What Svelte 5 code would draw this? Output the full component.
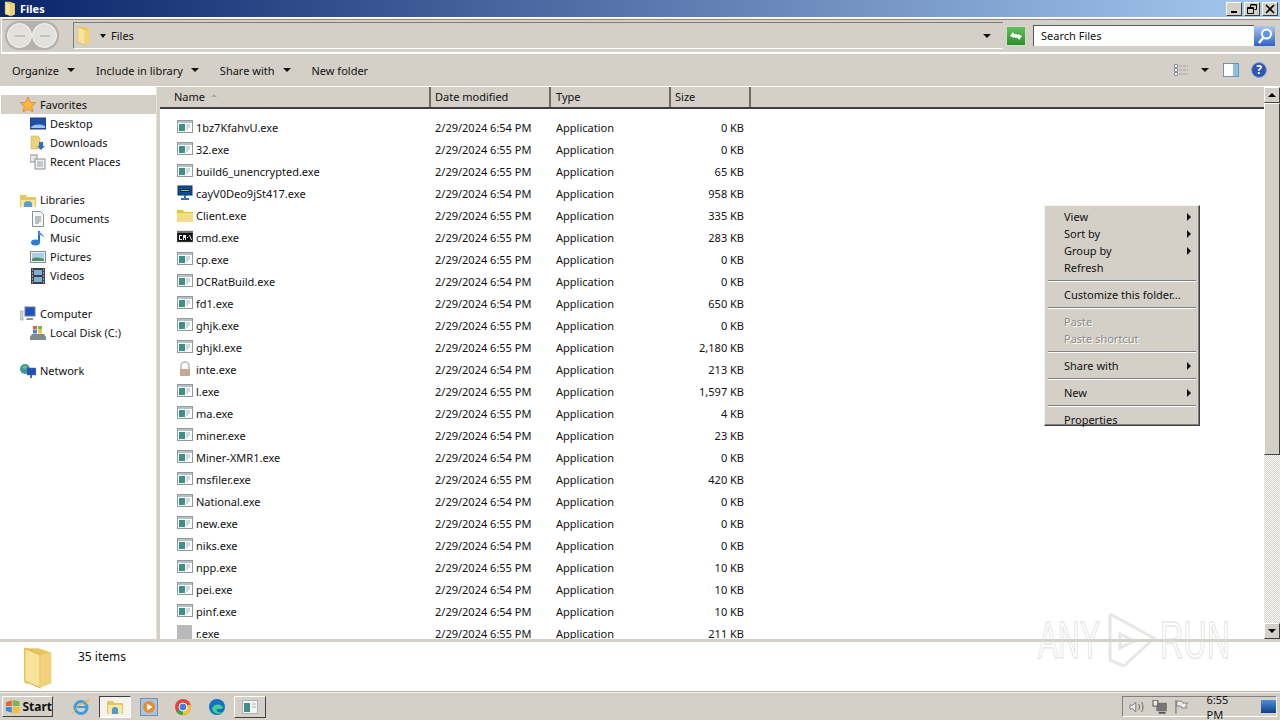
<script>
  const files = [
    ["1bz7KfahvU.exe", "6:54", "0 KB", "exe"],
    ["32.exe", "6:55", "0 KB", "exe"],
    ["build6_unencrypted.exe", "6:55", "65 KB", "exe"],
    ["cayV0Deo9jSt417.exe", "6:54", "958 KB", "monitor"],
    ["Client.exe", "6:55", "335 KB", "folder"],
    ["cmd.exe", "6:55", "283 KB", "cmd"],
    ["cp.exe", "6:55", "0 KB", "exe"],
    ["DCRatBuild.exe", "6:54", "0 KB", "exe"],
    ["fd1.exe", "6:54", "650 KB", "exe"],
    ["ghjk.exe", "6:55", "0 KB", "exe"],
    ["ghjkl.exe", "6:55", "2,180 KB", "exe"],
    ["inte.exe", "6:54", "213 KB", "lock"],
    ["l.exe", "6:55", "1,597 KB", "exe"],
    ["ma.exe", "6:55", "4 KB", "exe"],
    ["miner.exe", "6:54", "23 KB", "exe"],
    ["Miner-XMR1.exe", "6:54", "0 KB", "exe"],
    ["msfiler.exe", "6:55", "420 KB", "exe"],
    ["National.exe", "6:54", "0 KB", "exe"],
    ["new.exe", "6:55", "0 KB", "exe"],
    ["niks.exe", "6:54", "0 KB", "exe"],
    ["npp.exe", "6:55", "10 KB", "exe"],
    ["pei.exe", "6:54", "10 KB", "exe"],
    ["pinf.exe", "6:54", "10 KB", "exe"],
    ["r.exe", "6:55", "211 KB", "blank"],
  ];

  const navGroups = [
    [["Favorites", "star", true]],
    [["Libraries", "lib", true], ["Documents", "doc"], ["Music", "music"], ["Pictures", "pic"], ["Videos", "video"]],
    [["Computer", "computer", true], ["Local Disk (C:)", "disk"]],
    [["Network", "network", true]],
  ];
  const favChildren = [["Desktop", "desktop"], ["Downloads", "downloads"], ["Recent Places", "recent"]];

  const menu = [
    [["View", true], ["Sort by", true], ["Group by", true], ["Refresh"]],
    [["Customize this folder..."]],
    [["Paste", false, true], ["Paste shortcut", false, true]],
    [["Share with", true]],
    [["New", true]],
    [["Properties"]],
  ];
</script>

{#snippet folderIcon(w, h)}
  <svg width={w} height={h} viewBox="0 0 16 20">
    <path d="M2 1h6l6 2v14H2z" fill="#e8c65c" />
    <path d="M2 1l7 3v15l-7-3z" fill="#f7e39a" stroke="#d9b64c" stroke-width=".5" />
    <path d="M9 4l5-1v14l-5 2z" fill="#efd27a" />
  </svg>
{/snippet}

{#snippet fileIcon(kind)}
  <svg class="ficon" width="16" height="16" viewBox="0 0 16 16">
    {#if kind === "exe"}
      <rect x=".5" y="1.5" width="15" height="12" fill="#fbfcfc" stroke="#8f9a9c" />
      <rect x="1" y="2" width="14" height="2" fill="#b8c2c4" />
      <rect x="2" y="5" width="6" height="7" fill="#3f8f84" />
      <path d="M9 6h4M9 8h4M9 10h2" stroke="#aab4b6" />
    {:else if kind === "monitor"}
      <rect x="1" y="1" width="14" height="9" fill="#0d4f9c" stroke="#0b2d5c" />
      <rect x="3" y="4" width="10" height="3" fill="#1a2a2a" />
      <path d="M4 5.500h8" stroke="#7fd07f" />
      <path d="M8 10v3M4 14h8" stroke="#2f6fb0" stroke-width="2" />
    {:else if kind === "folder"}
      <path d="M0 3h6l1 2h9v10H0z" fill="#e2c04f" />
      <path d="M0 6h16v9H0z" fill="#f3dd8b" />
    {:else if kind === "cmd"}
      <rect x="0" y="2" width="16" height="11" fill="#111" stroke="#8b8f90" stroke-width=".5" />
      <rect x="0" y="2" width="16" height="2" fill="#6f7374" />
      <path d="M2 6h3v1H3v3h2v1H2zM6 6h3v5H8V9H7v2H6zM10 8h1v1h-1zM12 6h1l2 5h-1z" fill="#eee" />
    {:else if kind === "lock"}
      <path d="M4 8V5a4 4 0 0 1 8 0v3" fill="none" stroke="#c8c8c4" stroke-width="2" />
      <rect x="3" y="8" width="10" height="7" fill="#c9a795" />
    {:else}
      <rect x="0" y="0" width="15" height="14" fill="#b9b9b9" />
    {/if}
  </svg>
{/snippet}

{#snippet navIcon(kind)}
  <svg class="nicon" width="16" height="16" viewBox="0 0 16 16">
    {#if kind === "star"}
      <path d="M8 0l2.300 5.200 5.700.6-4.300 3.700 1.300 5.500L8 12.100 3 15l1.300-5.500L0 5.800l5.700-.6z" fill="#f6b93a" stroke="#e2803a" stroke-width=".8" />
    {:else if kind === "desktop"}
      <rect x="0" y="2" width="16" height="11" fill="#1d4fa8" stroke="#27417a" />
      <path d="M1 11c4-3 9-3 14-1v2H1z" fill="#9fc2e8" />
    {:else if kind === "downloads"}
      <path d="M1 1h7l2 2v11H1z" fill="#ecd27a" stroke="#c9a94e" stroke-width=".5" />
      <path d="M9 7h4v4h2l-4 4-4-4h2z" fill="#2a72c8" />
    {:else if kind === "recent"}
      <rect x="0" y="1" width="7" height="7" fill="#e6e8ea" stroke="#8a8f94" />
      <rect x="5" y="5" width="10" height="10" fill="#f0f1f2" stroke="#8a8f94" />
      <path d="M7 8h6M7 10h6M7 12h6" stroke="#9aa0a5" />
    {:else if kind === "lib"}
      <path d="M0 3h6l1 2h9v10H0z" fill="#e7c65b" />
      <path d="M1 8h14v7H1z" fill="#f5e7a8" />
      <path d="M4 15v-3a4 3 0 0 1 8 0v3z" fill="#5f9fd0" />
    {:else if kind === "doc"}
      <path d="M2.500.5h8l3 3v12h-11z" fill="#f6f7f8" stroke="#8a9098" />
      <path d="M5 6h6M5 8h6M5 10h6M5 12h4" stroke="#7b8590" />
    {:else if kind === "music"}
      <path d="M9 1v11" stroke="#2a6fb8" stroke-width="2" />
      <path d="M9 1c2 3 5 3 5 7-1-2-3-3-5-3z" fill="#5a9ad8" />
      <ellipse cx="5.500" cy="12.500" rx="4.500" ry="3" fill="#2a7fd0" />
    {:else if kind === "pic"}
      <rect x=".5" y="2.500" width="15" height="11" fill="#e8f0f6" stroke="#7f8c98" />
      <rect x="2" y="4" width="12" height="8" fill="#a9cfe6" />
      <path d="M2 10c4-3 8-1 12 0v2H2z" fill="#4f8f5a" />
    {:else if kind === "video"}
      <rect x="1" y="0" width="14" height="16" fill="#3a4248" />
      <rect x="4" y="2" width="8" height="5" fill="#7fb0d0" />
      <rect x="4" y="9" width="8" height="5" fill="#7fb0d0" />
      <path d="M2 2h1M2 5h1M2 8h1M2 11h1M2 14h1M13 2h1M13 5h1M13 8h1M13 11h1M13 14h1" stroke="#fff" />
    {:else if kind === "computer"}
      <rect x="5" y="1" width="10" height="9" fill="#1f50c0" stroke="#6c7a90" />
      <rect x="0" y="5" width="3" height="9" fill="#cfd3d8" stroke="#8a9098" stroke-width=".5" />
      <path d="M7 12h6v2H6z" fill="#8a9098" />
    {:else if kind === "disk"}
      <path d="M2 9h12l2 3v3H0v-3z" fill="#7f8a8a" />
      <rect x="3" y="1" width="4" height="3.500" fill="#e2603a" />
      <rect x="8" y="1" width="4" height="3.500" fill="#7ab648" />
      <rect x="3" y="5" width="4" height="3.500" fill="#3a8ad8" />
      <rect x="8" y="5" width="4" height="3.500" fill="#f2c03a" />
    {:else if kind === "network"}
      <circle cx="5" cy="6" r="5" fill="#3a9a9a" />
      <path d="M2 4c2-2 4-2 5 0-1 2-3 3-5 0z" fill="#7ac070" />
      <rect x="7" y="5" width="9" height="7" fill="#1f50c0" stroke="#5c6c88" stroke-width=".5" />
      <path d="M11 12v3" stroke="#5c6c88" stroke-width="2" />
    {/if}
  </svg>
{/snippet}

<div class="screen">
  <header class="titlebar">
    {@render folderIcon(14, 16)}
    <span class="title">Files</span>
    <div class="winbtns">
      <button class="winbtn"><i class="min"></i></button>
      <button class="winbtn"><svg width="10" height="10" viewBox="0 0 10 10"><path d="M3.500.5h6v5h-2M.5 3.500h6v6h-6z M3.500 1v2M.5 4.500h6M3.500 1h6" fill="none" stroke="#000" /></svg></button>
      <button class="winbtn"><svg width="10" height="10" viewBox="0 0 10 10"><path d="M1 1l8 8M9 1l-8 8" stroke="#000" stroke-width="1.600" /></svg></button>
    </div>
  </header>

  <div class="navbar">
    <div class="arrows">
      {#each [0, 1] as a (a)}
        <span class="round"><svg width="16" height="10" viewBox="0 0 16 10"><path d="M3 5h10" stroke="#c3c3c0" stroke-width="2" /></svg></span>
      {/each}
    </div>
    <div class="address">
      {@render folderIcon(16, 20)}
      <span class="bc-arrow"></span>
      <span>Files</span>
      <span class="drop addr-drop"></span>
    </div>
    <span class="refresh">
      <svg width="14" height="12" viewBox="0 0 14 12"><path d="M1 6l3-4 1 2h3v3H5v1zM13 6l-3 4-1-2H6V5h3V4z" fill="#fff" /></svg>
    </span>
    <div class="search">Search Files</div>
    <span class="search-btn">
      <svg width="18" height="18" viewBox="0 0 18 18"><circle cx="10.500" cy="7" r="4.500" fill="#5f95e6" stroke="#fff" stroke-width="2" /><path d="M7 11l-4 5" stroke="#fff" stroke-width="2.500" /></svg>
    </span>
  </div>

  <div class="toolbar">
    <span class="tool">Organize<i class="drop"></i></span>
    <span class="tool">Include in library<i class="drop"></i></span>
    <span class="tool">Share with<i class="drop"></i></span>
    <span class="tool">New folder</span>
    <div class="tool-right">
      <svg width="16" height="14" viewBox="0 0 16 14"><path d="M1.500 1.500h3v3h-3zM1.500 5.500h3v3h-3zM1.500 9.500h3v3h-3z" fill="#fff" stroke="#8a8f98" /><path d="M6 3h9M6 7h9M6 11h9" stroke="#9aa0a8" stroke-dasharray="3 1" /></svg>
      <i class="drop view-drop"></i>
      <svg class="pane" width="16" height="14" viewBox="0 0 16 14"><rect x=".5" y=".5" width="15" height="13" fill="#fff" stroke="#6a93b8" /><rect x="10" y="1" width="5" height="12" fill="#8fc0e0" /></svg>
      <svg class="help" width="16" height="16" viewBox="0 0 16 16"><circle cx="8" cy="8" r="7.500" fill="#2d55b5" stroke="#8fa4d0" /><text x="8" y="12" class="help-q">?</text></svg>
    </div>
  </div>

  <main class="body">
    <aside class="sidebar">
      {#each navGroups as group, g (g)}
        <div class="nav-group">
          {#each group as item, i (i)}
            <div class="nav-row" class:head={item[2]} class:selected={g === 0}>
              {@render navIcon(item[1])}
              <span>{item[0]}</span>
            </div>
            {#if g === 0}
              {#each favChildren as child (child[0])}
                <div class="nav-row">
                  {@render navIcon(child[1])}
                  <span>{child[0]}</span>
                </div>
              {/each}
            {/if}
          {/each}
        </div>
      {/each}
    </aside>

    <section class="content">
      <div class="columns">
        <div class="col col-name">Name<i class="sort"></i></div>
        <div class="col col-date">Date modified</div>
        <div class="col col-type">Type</div>
        <div class="col col-size">Size</div>
      </div>
      <div class="rows">
        {#each files as f (f[0])}
          <div class="row">
            <div class="cell-name">
              {@render fileIcon(f[3])}
              <span>{f[0]}</span>
            </div>
            <div class="cell-date">2/29/2024 {f[1]} PM</div>
            <div class="cell-type">Application</div>
            <div class="cell-size">{f[2]}</div>
          </div>
        {/each}
      </div>
    </section>

    <div class="scrollbar">
      <span class="sb-btn"><i class="up"></i></span>
      <span class="sb-thumb"></span>
      <span class="sb-track"></span>
      <span class="sb-btn"><i class="down"></i></span>
    </div>
  </main>

  <div class="status">
    <span class="status-icon">{@render folderIcon(36, 44)}</span>
    <span class="count">35 items</span>
  </div>

  <footer class="taskbar">
    <button class="start">
      <svg width="16" height="14" viewBox="0 0 16 14"><path d="M1 2l6-2v6H1z" fill="#e8603a" /><path d="M8 0l7 1v5H8z" fill="#7ab648" /><path d="M1 7h6v6l-6-2z" fill="#3a8ad8" /><path d="M8 7h7v6l-7 1z" fill="#f2c03a" /></svg>
      <span>Start</span>
    </button>
    <div class="apps">
      <span class="app">
        <svg width="18" height="18" viewBox="0 0 18 18"><circle cx="9" cy="9.500" r="6" fill="none" stroke="#3d9be0" stroke-width="3" /><path d="M5 9h9" stroke="#3d9be0" stroke-width="2" /><path d="M1 16c2-6 10-13 16-14-4 0-2 4-3 5" fill="none" stroke="#e8b23a" /></svg>
      </span>
      <span class="app active">
        <svg width="18" height="16" viewBox="0 0 18 16"><path d="M1 2h6l1 2h9v11H1z" fill="#e7c65b" /><path d="M2 6h14v9H2z" fill="#f5e7a8" /><path d="M6 15v-4a3 3 0 0 1 6 0v4z" fill="#4f98c8" /></svg>
      </span>
      <span class="app">
        <svg width="18" height="18" viewBox="0 0 18 18"><rect x=".5" y=".5" width="17" height="17" fill="#a8c4e0" stroke="#6a8fb8" /><circle cx="9" cy="9" r="6" fill="#ef8a2a" /><path d="M7 5.500L12.500 9 7 12.500z" fill="#fff" /></svg>
      </span>
      <span class="app">
        <svg width="18" height="18" viewBox="0 0 18 18"><circle cx="9" cy="9" r="8" fill="#e0463a" /><path d="M9 9L2 13.600A8 8 0 0 0 9 17z" fill="#3da24a" /><path d="M9 9l7.500-2.500A8 8 0 0 1 9 17z" fill="#f6c42e" /><circle cx="9" cy="9" r="4" fill="#3f7fe0" stroke="#fff" /></svg>
      </span>
      <span class="app">
        <svg width="18" height="18" viewBox="0 0 18 18"><circle cx="9" cy="9" r="8" fill="#1470c4" /><path d="M4 11c1-5 8-6 11-2 0 2-3 2-5 2-2 0-2 2 0 3 2 1 5 0 6-1-2 4-10 4-12-2z" fill="#44d08c" /></svg>
      </span>
      <button class="app task">
        <svg width="16" height="14" viewBox="0 0 16 14"><rect x=".5" y=".5" width="15" height="13" fill="#f3f5f5" stroke="#aab2b4" /><rect x="2" y="3" width="6" height="9" fill="#3f8f84" /><path d="M10 4h4M10 7h4" stroke="#aab4b6" /></svg>
      </button>
    </div>
    <div class="tray">
      <svg width="16" height="14" viewBox="0 0 16 14"><path d="M1 5h3l3-3v10L4 9H1z" fill="#e8e8e4" stroke="#666" stroke-width=".8" /><path d="M10 4c1 2 1 4 0 6M13 2c2 3 2 7 0 10" fill="none" stroke="#666" /></svg>
      <svg width="16" height="14" viewBox="0 0 16 14"><rect x="5" y="3" width="10" height="8" fill="#777" stroke="#555" stroke-width=".5" /><rect x="1" y="0" width="5" height="6" fill="#e8e8e4" stroke="#555" /><path d="M7 13h7" stroke="#555" stroke-width="2" /></svg>
      <svg width="16" height="14" viewBox="0 0 16 14"><path d="M2 0v14" stroke="#666" /><path d="M3 1h5l1 2h5l-2 3 1 2H8L7 6H3z" fill="#eee" stroke="#666" stroke-width=".8" /></svg>
      <span class="clock">6:55 PM</span>
      <span class="show-desktop"></span>
    </div>
  </footer>

  <div class="context">
    {#each menu as group, g (g)}
      {#if g > 0}<hr />{/if}
      {#each group as item (item[0])}
        <div class="menu-item" class:disabled={item[2]}>
          <span>{item[0]}</span>
          {#if item[1]}<i class="submenu"></i>{/if}
        </div>
      {/each}
    {/each}
  </div>

  <svg class="watermark" width="200" height="66" viewBox="0 0 200 66">
    <text x="0" y="50" class="wm" textLength="62" lengthAdjust="spacingAndGlyphs">ANY</text>
    <path d="M72 6l44 24-30 28" class="wm-shape" />
    <path d="M72 6v46l14 6M82 26v14l14-7z" class="wm-shape" />
    <text x="122" y="50" class="wm" textLength="70" lengthAdjust="spacingAndGlyphs">RUN</text>
  </svg>
</div>

<style>
  :global(body) {
    margin: 0;
    overflow: hidden;
    background: #d4d0c8;
  }

  .screen {
    position: relative;
    width: 1280px;
    height: 720px;
    overflow: hidden;
    display: flex;
    flex-direction: column;
    background: #d4d0c8;
    font-family: "Noto Sans", "DejaVu Sans", sans-serif;
    font-size: 11px;
    color: #111;
  }

  i {
    display: inline-block;
  }

  .titlebar {
    height: 18px;
    flex: none;
    box-sizing: border-box;
    padding: 0 2px 0 3px;
    display: flex;
    align-items: center;
    gap: 3px;
    background: linear-gradient(90deg, #0a246a, #a6caf0);
    border-bottom: 1px solid #fff;
  }

  .title {
    color: #fff;
    font-weight: 700;
  }

  .winbtns {
    margin-left: auto;
    display: flex;
    gap: 2px;
  }

  .winbtn {
    width: 16px;
    height: 14px;
    padding: 0;
    display: flex;
    align-items: center;
    justify-content: center;
    background: #d4d0c8;
    border: 1px solid;
    border-color: #fff #404040 #404040 #fff;
  }

  .min {
    width: 6px;
    height: 2px;
    margin-top: 7px;
    background: #000;
  }

  .navbar {
    height: 36px;
    flex: none;
    box-sizing: border-box;
    margin-left: 1px;
    padding-right: 4px;
    display: flex;
    align-items: center;
    border-top: 1px solid #f4f3ef;
    border-bottom: 2px solid #fff;
    border-left: 1px solid #fff;
    box-shadow: inset 0 1px 0 #8d8a84;
  }

  .arrows {
    display: flex;
    margin-left: 3px;
    padding: 2px;
    border-radius: 14px;
    background: #b4b2ac;
  }

  .round {
    width: 25px;
    height: 25px;
    display: flex;
    align-items: center;
    justify-content: center;
    border-radius: 50%;
    background: #e2e1dc;
    border: 1px solid #f5f5f2;
    box-sizing: border-box;
  }

  .address {
    margin-left: 14px;
    width: 930px;
    height: 27px;
    box-sizing: border-box;
    padding-left: 2px;
    display: flex;
    align-items: center;
    border-top: 1px solid #7f7c75;
    border-left: 1px solid #7f7c75;
    border-bottom: 1px solid #fff;
  }

  .bc-arrow {
    margin: 0 5px 0 8px;
    border: 3px solid transparent;
    border-top: 4px solid #111;
    border-bottom: 0;
  }

  .drop {
    width: 0;
    height: 0;
    border: 4px solid transparent;
    border-top: 4px solid #111;
    border-bottom: 0;
  }

  .addr-drop {
    margin-left: auto;
    margin-right: 12px;
  }

  .refresh {
    width: 20px;
    height: 20px;
    margin-left: 3px;
    display: flex;
    align-items: center;
    justify-content: center;
    background: linear-gradient(#62bf5e, #2c8f2e);
    border: 1px solid #cfe0c8;
    box-sizing: border-box;
  }

  .search {
    margin-left: 7px;
    width: 221px;
    height: 21px;
    box-sizing: border-box;
    padding-left: 7px;
    line-height: 19px;
    background: #fff;
    border-top: 1px solid #555;
    border-left: 1px solid #555;
  }

  .search-btn {
    width: 21px;
    height: 20px;
    display: flex;
    align-items: center;
    justify-content: center;
    background: linear-gradient(#a8c8f0, #2f62c0);
  }

  .toolbar {
    height: 32px;
    flex: none;
    box-sizing: border-box;
    padding: 0 13px 0 12px;
    display: flex;
    align-items: center;
  }

  .tool {
    display: flex;
    align-items: center;
    margin-right: 21px;
  }

  .tool .drop {
    margin-left: 8px;
  }

  .tool-right {
    margin-left: auto;
    display: flex;
    align-items: center;
  }

  .view-drop {
    margin: 0 11px 0 12px;
  }

  .pane {
    margin-right: 12px;
    margin-left: 3px;
  }

  .help-q {
    fill: #fff;
    font-size: 12px;
    font-weight: 700;
    text-anchor: middle;
  }

  .body {
    flex: 1;
    min-height: 0;
    display: flex;
    border-top: 1px solid #fff;
    border-bottom: 3px solid #d4d0c8;
  }

  .sidebar {
    width: 157px;
    flex: none;
    box-sizing: border-box;
    padding-top: 8px;
    background: #fff;
    border-right: 1px solid #e4e2dd;
  }

  .nav-group {
    margin-bottom: 19px;
  }

  .nav-row {
    height: 19px;
    box-sizing: border-box;
    padding-left: 30px;
    display: flex;
    align-items: center;
    gap: 4px;
  }

  .nav-row.head {
    padding-left: 20px;
  }

  .nav-row.selected {
    margin-left: 1px;
    padding-left: 19px;
    background: #d4d0c8;
  }

  .content {
    flex: 1;
    min-width: 0;
    margin-left: 3px;
    display: flex;
    flex-direction: column;
    background: #fff;
  }

  .columns {
    height: 22px;
    flex: none;
    box-sizing: border-box;
    display: flex;
    align-items: flex-end;
    background: #d4d0c8;
    border-bottom: 2px solid #404040;
  }

  .col {
    height: 20px;
    box-sizing: border-box;
    padding-left: 4px;
    line-height: 20px;
    border-right: 2px solid #6f6c66;
  }

  .col-name {
    width: 271px;
    padding-left: 14px;
    display: flex;
    align-items: center;
  }

  .col-date {
    width: 120px;
  }

  .col-type {
    width: 120px;
    padding-left: 5px;
  }

  .col-size {
    width: 80px;
  }

  .sort {
    margin-left: 6px;
    margin-bottom: 3px;
    border: 3px solid transparent;
    border-bottom: 3px solid #aaa;
    border-top: 0;
  }

  .rows {
    flex: 1;
    min-height: 0;
    overflow: hidden;
    padding-top: 7px;
  }

  .row {
    height: 22px;
    display: flex;
    align-items: center;
  }

  .cell-name {
    width: 275px;
    box-sizing: border-box;
    padding-left: 17px;
    display: flex;
    align-items: center;
    gap: 3px;
  }

  .cell-date {
    width: 120px;
  }

  .cell-type {
    width: 115px;
    padding-left: 1px;
  }

  .cell-size {
    width: 73px;
    text-align: right;
  }

  .scrollbar {
    width: 16px;
    flex: none;
    display: flex;
    flex-direction: column;
    background: #d4d0c8;
  }

  .sb-btn {
    height: 16px;
    flex: none;
    box-sizing: border-box;
    display: flex;
    align-items: center;
    justify-content: center;
    background: #d4d0c8;
    border: 1px solid;
    border-color: #fff #404040 #404040 #fff;
  }

  .up {
    border: 4px solid transparent;
    border-bottom: 4px solid #000;
    border-top: 0;
  }

  .down {
    border: 4px solid transparent;
    border-top: 4px solid #000;
    border-bottom: 0;
  }

  .sb-thumb {
    height: 352px;
    flex: none;
    box-sizing: border-box;
    background: #d4d0c8;
    border: 1px solid;
    border-color: #fff #404040 #404040 #fff;
  }

  .sb-track {
    flex: 1;
    background: repeating-conic-gradient(#fff 0 25%, #d4d0c8 0 50%) 0 0 / 2px 2px;
  }

  .status {
    height: 50px;
    flex: none;
    box-sizing: border-box;
    display: flex;
    background: #fff;
    border-bottom: 1px solid #b5b2aa;
  }

  .status-icon {
    margin: 4px 0 0 20px;
  }

  .count {
    margin: 6px 0 0 22px;
    font-size: 12px;
  }

  .taskbar {
    height: 28px;
    flex: none;
    box-sizing: border-box;
    padding: 0 3px 0 2px;
    display: flex;
    align-items: center;
    border-top: 1px solid #f4f3ef;
  }

  .start {
    width: 51px;
    height: 21px;
    padding: 0 0 0 2px;
    display: flex;
    align-items: center;
    gap: 2px;
    font: 700 12px "Noto Sans", sans-serif;
    color: #111;
    background: #d4d0c8;
    border: 1px solid;
    border-color: #fff #404040 #404040 #fff;
  }

  .apps {
    margin-left: 11px;
    display: flex;
    align-items: center;
  }

  .app {
    width: 34px;
    height: 22px;
    display: flex;
    align-items: center;
    justify-content: center;
  }

  .app.active {
    box-sizing: border-box;
    width: 32px;
    margin: 0 1px;
    background: #f4f3f0;
    border: 1px solid;
    border-color: #404040 #fff #fff #404040;
  }

  .app.task {
    width: 32px;
    padding: 0;
    background: #d4d0c8;
    border: 1px solid;
    border-color: #fff #404040 #404040 #fff;
  }

  .tray {
    margin-left: auto;
    width: 155px;
    height: 21px;
    box-sizing: border-box;
    padding-left: 6px;
    display: flex;
    align-items: center;
    gap: 7px;
    border: 1px solid;
    border-color: #808080 #fff #fff #808080;
  }

  .clock {
    margin-left: 10px;
  }

  .show-desktop {
    width: 16px;
    height: 13px;
    margin-left: 7px;
    background: linear-gradient(#4d8fd8, #123f8a);
  }

  .context {
    position: absolute;
    left: 1044px;
    top: 205px;
    width: 156px;
    height: 221px;
    box-sizing: border-box;
    padding: 2px 2px;
    background: #d4d0c8;
    border: 1px solid;
    border-color: #f4f3ef #404040 #404040 #f4f3ef;
    box-shadow: inset -1px -1px 0 #808080;
  }

  .menu-item {
    height: 17px;
    padding-left: 17px;
    padding-right: 6px;
    display: flex;
    align-items: center;
    justify-content: space-between;
  }

  .menu-item.disabled {
    color: #8e8c87;
    text-shadow: 1px 1px 0 #fff;
  }

  .submenu {
    border: 4px solid transparent;
    border-left: 4px solid #111;
    border-right: 0;
  }

  hr {
    height: 0;
    margin: 4px 1px;
    border: 0;
    border-top: 1px solid #808080;
    border-bottom: 1px solid #fff;
  }

  .watermark {
    position: absolute;
    left: 1038px;
    top: 608px;
    opacity: 0.55;
  }

  .wm {
    font: 52px "Liberation Sans", sans-serif;
    fill: rgba(255, 255, 255, 0.3);
    stroke: #d4d4d2;
    stroke-width: 1.500;
  }

  .wm-shape {
    fill: none;
    stroke: #d4d4d2;
    stroke-width: 3;
  }
</style>
